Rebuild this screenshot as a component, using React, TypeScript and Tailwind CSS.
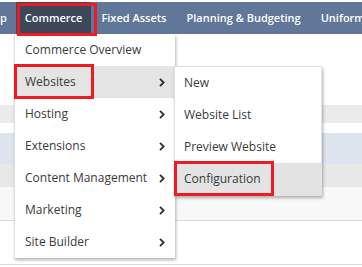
import React from "react";

const Chevron = () => (
  <svg width="6" height="9" viewBox="0 0 6 9" className="shrink-0">
    <path d="M1 0.8 L4.6 4.5 L1 8.2" fill="none" stroke="#333" strokeWidth="1.9" />
  </svg>
);

const mainItems = [
  { label: "Commerce Overview", sub: false },
  { label: "Websites", sub: true, active: true },
  { label: "Hosting", sub: true },
  { label: "Extensions", sub: true },
  { label: "Content Management", sub: true },
  { label: "Marketing", sub: true },
  { label: "Site Builder", sub: true },
];

const subItems = [
  { label: "New" },
  { label: "Website List" },
  { label: "Preview Website" },
  { label: "Configuration", active: true },
];

export default function App() {
  return (
    <div className="relative w-[362px] h-[267px] bg-white overflow-hidden font-['Open_Sans',sans-serif]">
      <div className="h-[2px]" />
      <nav className="flex h-[32px] bg-[#607799] text-white text-[11px] font-semibold whitespace-nowrap">
        <div className="flex items-center pr-[9px] ml-[0px]">p</div>
        <div className="flex items-center px-[9px] bg-[#3c475a]">Commerce</div>
        <div className="flex items-center px-[10px]">Fixed Assets</div>
        <div className="flex items-center px-[10px]">Planning &amp; Budgeting</div>
        <div className="flex items-center px-[10px]">Uniforms</div>
      </nav>
      <div className="mt-[71px]">
        <div className="h-[18px] bg-[#ebebeb]" />
        <div className="h-[10px] bg-white" />
        <div className="h-[31px] bg-[#dee4ee]" />
        <div className="h-[23px] bg-[#e8e8e8]" />
        <div className="h-[34px] bg-[#f8f8f8] border-b border-[#dcdcdc]" />
        <div className="h-[44px] bg-white border-b border-[#dcdcdc]" />
      </div>

      <div className="absolute left-[14px] top-[34px] w-[161px] bg-white border-l border-[#e0e0e0] shadow-[1px_2px_3px_rgba(0,0,0,0.3)] text-[12px] text-[#3a3a3a]">
        {mainItems.map((it) => (
          <div
            key={it.label}
            className={`flex items-center justify-between h-[32px] pl-[10px] pr-[10px] ${it.active ? "bg-[#e4e4e4]" : ""}`}
          >
            <span>{it.label}</span>
            {it.sub && <Chevron />}
          </div>
        ))}
      </div>

      <div className="absolute left-[174px] top-[66px] w-[148px] bg-white border border-[#e2e2e2] shadow-[1px_2px_3px_rgba(0,0,0,0.3)] text-[12px] text-[#3a3a3a]">
        {subItems.map((it) => (
          <div
            key={it.label}
            className={`flex items-center h-[32px] pl-[9px] ${it.active ? "bg-[#e3e3e3]" : ""}`}
          >
            {it.label}
          </div>
        ))}
      </div>

      <div className="absolute left-[17px] top-[3px] w-[80px] h-[33px] border-[3px] border-[#ed1c24]" />
      <div className="absolute left-[14px] top-[64px] w-[80px] h-[35px] border-[3px] border-[#ed1c24]" />
      <div className="absolute left-[174px] top-[161px] w-[100px] h-[35px] border-[3px] border-[#ed1c24]" />
    </div>
  );
}
